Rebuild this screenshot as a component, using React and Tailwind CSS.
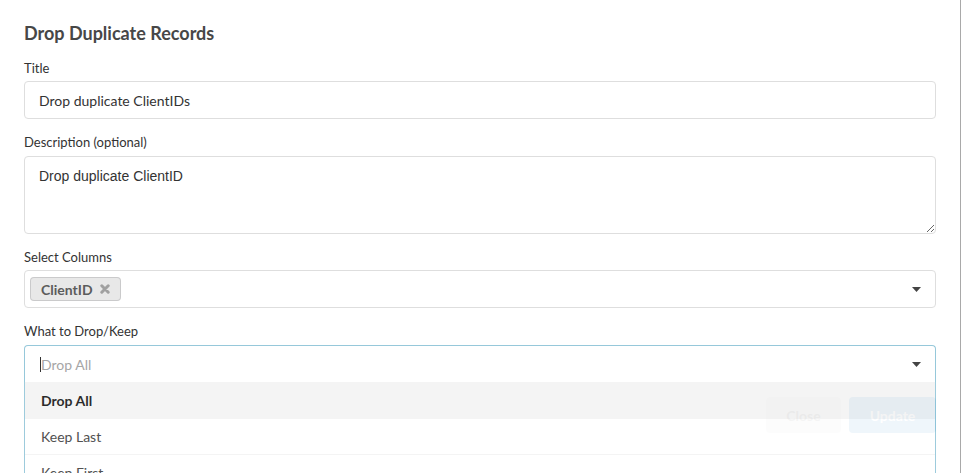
import React from "react";

const lato = { fontFamily: "Lato, 'Open Sans', sans-serif" };

const Caret = () => (
  <svg width="9" height="5" viewBox="0 0 9 5" className="text-[#444]">
    <path d="M0 0h9L4.5 5z" fill="currentColor" />
  </svg>
);

const Field = ({ label, gap = "mb-[5px]", children }) => (
  <div className="flex flex-col">
    <label className={`text-[13px] leading-4 text-[#333] ${gap}`}>{label}</label>
    {children}
  </div>
);

const options = [
  { label: "Drop All", selected: true },
  { label: "Keep Last" },
  { label: "Keep First" },
  { label: "Keep None" },
];

export default function App() {
  return (
    <div
      className="w-[961px] h-[473px] overflow-hidden bg-white border-r border-[#a9a9a9] px-6 pt-[21px]"
      style={lato}
    >
      <h2 className="text-[18px] leading-6 font-bold text-[#474747] mb-[15px]">
        Drop Duplicate Records
      </h2>

      <div className="flex flex-col gap-[15px]">
        <Field label="Title">
          <input
            defaultValue="Drop duplicate ClientIDs"
            className="h-[38px] w-full rounded border border-[#dedede] px-[14px] text-[14px] text-[#333] outline-none"
            style={lato}
          />
        </Field>

        <Field label="Description (optional)" gap="mb-[6px]">
          <textarea
            defaultValue="Drop duplicate ClientID"
            className="h-[78px] w-full rounded border border-[#dedede] px-[14px] pt-[10px] pb-[11px] text-[14px] leading-[18px] text-[#333] outline-none"
            style={{ fontFamily: "'Liberation Sans', Arial, sans-serif" }}
          />
        </Field>

        <Field label="Select Columns">
          <div className="h-[38px] w-full rounded border border-[#dedede] pl-[5px] pr-[14px] flex items-center">
            <span className="flex items-center h-6 rounded bg-[#e8e8e8] shadow-[inset_0_0_0_1px_rgba(34,36,38,0.15)] px-[11px] text-[14px] font-bold text-[#5c5c5c]">
              ClientID
              <svg width="10" height="10" viewBox="0 0 10 10" className="ml-[7px]">
                <path d="M1.8 1.8l6.4 6.4M8.2 1.8l-6.4 6.4" stroke="#a0a0a0" strokeWidth="3" strokeLinecap="round" />
              </svg>
            </span>
            <span className="ml-auto">
              <Caret />
            </span>
          </div>
        </Field>

        <Field label="What to Drop/Keep" gap="mb-[6px]">
          <div className="relative">
            <div className="h-[37px] w-full rounded-t border border-b-0 border-[#96c8da] pl-4 pr-[14px] flex items-center">
              <span className="w-px h-[15px] bg-[#333] -ml-px" />
              <span className="text-[14px] text-[#a6a6a6]">Drop All</span>
              <span className="ml-auto">
                <Caret />
              </span>
            </div>
            <div className="absolute z-10 top-full left-0 right-0 opacity-[0.93] bg-white border-x border-b border-[#96c8da]">
              {options.map((o, i) => (
                <div
                  key={o.label}
                  className={`h-9 flex items-center px-4 text-[14px] ${
                    i > 0 ? "border-t border-[#f4f4f4]" : ""
                  } ${o.selected ? "bg-[#f4f4f4] font-bold text-[#1a1a1a]" : "text-[#444]"}`}
                >
                  {o.label}
                </div>
              ))}
            </div>
          </div>
        </Field>
      </div>

      <div className="flex justify-end gap-2 mt-[15px]">
        <button className="h-9 w-[75px] rounded bg-[#e0e1e2] text-[14px] font-bold text-[#666]">
          Close
        </button>
        <button className="h-9 w-[87px] rounded bg-[#2185d0] text-[14px] font-bold text-white">
          Update
        </button>
      </div>
    </div>
  );
}
